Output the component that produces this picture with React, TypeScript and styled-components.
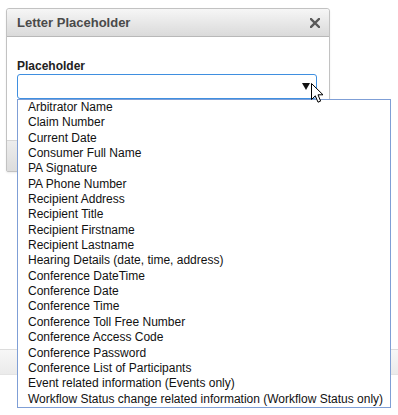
import styled, { createGlobalStyle } from "styled-components";

const placeholders = [
  "Arbitrator Name",
  "Claim Number",
  "Current Date",
  "Consumer Full Name",
  "PA Signature",
  "PA Phone Number",
  "Recipient Address",
  "Recipient Title",
  "Recipient Firstname",
  "Recipient Lastname",
  "Hearing Details (date, time, address)",
  "Conference DateTime",
  "Conference Date",
  "Conference Time",
  "Conference Toll Free Number",
  "Conference Access Code",
  "Conference Password",
  "Conference List of Participants",
  "Event related information (Events only)",
  "Workflow Status change related information (Workflow Status only)",
];

export default function App() {
  return (
    <Page>
      <GlobalStyle />
      <Dialog>
        <Header>
          <Title>Letter Placeholder</Title>
          <Close aria-label="close">
            <svg width="10" height="10" viewBox="0 0 10 10">
              <path d="M1 1 L9 9 M9 1 L1 9" stroke="#5a5a5a" strokeWidth="2.4" strokeLinecap="square" />
            </svg>
          </Close>
        </Header>
        <Body>
          <Label>Placeholder</Label>
          <SelectWrap>
            <Select>
              <svg width="8" height="7" viewBox="0 0 8 7">
                <path d="M0 0 H8 L4 7 Z" fill="#111" />
              </svg>
            </Select>
            <Options>
              {placeholders.map((p) => (
                <Option key={p}>{p}</Option>
              ))}
            </Options>
          </SelectWrap>
        </Body>
        <Footer />
      </Dialog>
      <PageBar />
      <Pointer width="13" height="21" viewBox="0 0 13 21">
        <path
          d="M0.5 0.5 L0.5 16.5 L4.3 12.8 L7 19.2 L9.6 18.1 L7 11.8 L12 11.8 Z"
          fill="#fff"
          stroke="#000"
          strokeWidth="1"
          strokeLinejoin="round"
        />
      </Pointer>
    </Page>
  );
}

const GlobalStyle = createGlobalStyle`
  html, body {
    margin: 0;
    background: #fff;
    font-family: "Liberation Sans", Arial, sans-serif;
  }
`;

const Page = styled.div`
  position: relative;
  width: 398px;
  height: 415px;
  padding-top: 8px;
  box-sizing: border-box;
  overflow: hidden;
`;

const Dialog = styled.div`
  margin-left: 6px;
  width: 322px;
  border: 1px solid #c2c2c2;
  border-radius: 3px 3px 2px 2px;
  background: #fff;
  box-shadow: 0 1px 2px rgba(0, 0, 0, 0.08);
`;

const Header = styled.div`
  display: flex;
  align-items: center;
  justify-content: space-between;
  height: 27px;
  padding: 0 9px 0 10px;
  background: linear-gradient(#f6f6f6, #dadada);
  border-bottom: 1px solid #b8b8b8;
  border-radius: 3px 3px 0 0;
`;

const Title = styled.span`
  font-size: 13px;
  font-weight: bold;
  color: #4a4a4a;
`;

const Close = styled.span`
  display: flex;
  align-items: center;
  padding-top: 1px;
`;

const Body = styled.div`
  padding: 22px 10px 41px 10px;
`;

const Label = styled.div`
  font-size: 12px;
  line-height: 14px;
  font-weight: bold;
  color: #222;
  margin-bottom: 1px;
`;

const SelectWrap = styled.div`
  position: relative;
  width: 300px;
`;

const Select = styled.div`
  height: 25px;
  box-sizing: border-box;
  border: 1px solid #3f8fe0;
  border-radius: 3px;
  display: flex;
  align-items: center;
  justify-content: flex-end;
  padding: 0 6px 1px 0;
  background: #fff;
`;

const Options = styled.div`
  position: absolute;
  top: 25px;
  left: 0;
  width: 374px;
  box-sizing: border-box;
  border: 1px solid #7f9fd6;
  background: #fff;
  padding: 0 0 0 10px;
  z-index: 2;
`;

const Option = styled.div`
  height: 15.35px;
  line-height: 15px;
  font-size: 12px;
  color: #111;
  white-space: nowrap;
`;

const Footer = styled.div`
  height: 30px;
  background: linear-gradient(#ededed, #dcdcdc);
  border-top: 1px solid #d6d6d6;
`;

const PageBar = styled.div`
  margin-top: 177px;
  height: 24px;
  background: linear-gradient(#f7f7f7, #ebebeb);
  border-top: 1px solid #dcdcdc;
  border-bottom: 1px solid #e4e4e4;
`;

const Pointer = styled.svg`
  position: absolute;
  left: 311px;
  top: 83px;
  z-index: 3;
`;
